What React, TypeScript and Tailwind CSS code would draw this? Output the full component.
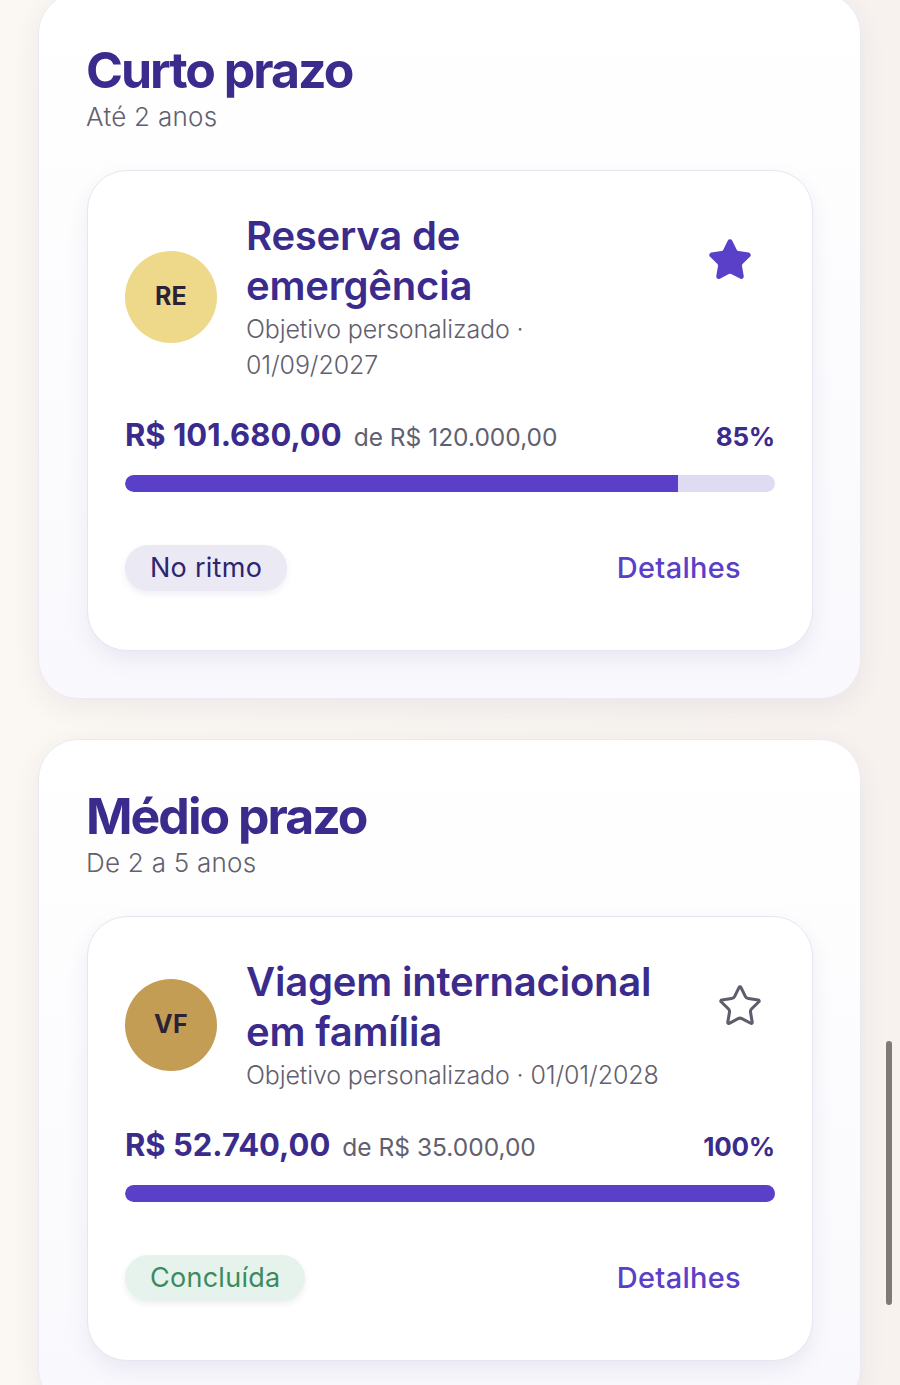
import React from "react";

const StarIcon = ({ filled, className }: { filled: boolean; className?: string }) => (
  <svg
    width="46"
    height="46"
    viewBox="0 0 24 24"
    fill={filled ? "currentColor" : "none"}
    stroke="currentColor"
    strokeWidth={1.6}
    strokeLinecap="round"
    strokeLinejoin="round"
    className={className}
  >
    <path d="M11.525 2.295a.53.53 0 0 1 .95 0l2.31 4.679a2.123 2.123 0 0 0 1.595 1.16l5.166.756a.53.53 0 0 1 .294.904l-3.736 3.638a2.123 2.123 0 0 0-.611 1.878l.882 5.14a.53.53 0 0 1-.771.56l-4.618-2.428a2.122 2.122 0 0 0-1.973 0L6.396 21.01a.53.53 0 0 1-.77-.56l.881-5.139a2.122 2.122 0 0 0-.611-1.879L2.16 9.795a.53.53 0 0 1 .294-.906l5.165-.755a2.122 2.122 0 0 0 1.597-1.16z" />
  </svg>
);

type Goal = {
  initials: string;
  avatarBg: string;
  titleLines: string[];
  subLines: string[];
  amount: string;
  target: string;
  pct: number;
  starred: boolean;
  starMr: string;
  status: "ritmo" | "concluida";
};

const GoalCard = ({ g }: { g: Goal }) => (
  <div className="rounded-[40px] border border-[#e7e5f0] bg-white px-[37px] pt-[40px] pb-[59px] shadow-[0_10px_22px_rgba(50,40,110,0.08)]">
    <div className="flex items-center">
      <div
        className={`flex h-[92px] w-[92px] shrink-0 items-center justify-center rounded-full ${g.avatarBg}`}
      >
        <span className="text-[25px] font-bold text-[#2b2238] tracking-[0.01em]">{g.initials}</span>
      </div>
      <div className="ml-[29px] flex-1">
        {g.titleLines.map((t) => (
          <div
            key={t}
            className="whitespace-nowrap text-[40px] leading-[50px] font-semibold tracking-[-0.005em] text-[#3a2b8c]"
          >
            {t}
          </div>
        ))}
        {g.subLines.map((t) => (
          <div key={t} className="whitespace-nowrap text-[25px] leading-[36px] font-light tracking-[-0.005em] text-[#62606e]">
            {t}
          </div>
        ))}
      </div>
      <div className={`self-start mt-[26px] ${g.starMr}`}>
        <StarIcon filled={g.starred} className={g.starred ? "text-[#5a40c8]" : "text-[#5f5d6b]"} />
      </div>
    </div>

    <div className="mt-[29px] flex h-[40px] items-baseline">
      <span className="text-[31px] font-bold tracking-[0em] text-[#3a2b8c]">{g.amount}</span>
      <span className="ml-[12px] text-[24.5px] font-normal tracking-[0em] text-[#62606e]">
        de {g.target}
      </span>
      <span className="ml-auto text-[26px] font-bold tracking-[-0.01em] text-[#3a2b8c]">{g.pct}%</span>
    </div>

    <div className="mt-[23px] h-[17px] w-full overflow-hidden rounded-full bg-[#dedbf2]">
      <div className="h-full rounded-l-full bg-[#5a40c8]" style={{ width: `${g.pct}%` }} />
    </div>

    <div className="mt-[53px] flex items-center justify-between">
      {g.status === "ritmo" ? (
        <span className="flex h-[46px] items-center rounded-full bg-[#ebe9f3] px-[25px] text-[27px] font-normal tracking-[0.01em] text-[#2e2470] shadow-[0_3px_6px_rgba(50,40,110,0.08)]">
          No ritmo
        </span>
      ) : (
        <span className="flex h-[46px] items-center rounded-full bg-[#e6f3ec] px-[25px] text-[27px] font-normal tracking-[0.01em] text-[#3d8a5e] shadow-[0_3px_6px_rgba(50,40,110,0.08)]">
          Concluída
        </span>
      )}
      <span className="mr-[34px] text-[29px] font-medium tracking-[0.01em] text-[#5a40c8]">Detalhes</span>
    </div>
  </div>
);

const Section = ({
  title,
  subtitle,
  goal,
  className,
}: {
  title: string;
  subtitle: string;
  goal: Goal;
  className?: string;
}) => (
  <section
    className={`ml-[38px] w-[823px] rounded-[40px] border border-[#ebe9f2] bg-gradient-to-b from-white to-[#f9f9fd] px-[47px] pt-[48px] pb-[47px] shadow-[0_8px_28px_rgba(60,50,120,0.07)] ${className ?? ""}`}
  >
    <h2 className="text-[50px] leading-[56px] font-bold tracking-[-0.04em] text-[#3a2b8c]">{title}</h2>
    <p className="text-[26px] leading-[38px] font-light tracking-[0.01em] text-[#62606e]">{subtitle}</p>
    <div className="mt-[34px] pl-[1px]">
      <GoalCard g={goal} />
    </div>
  </section>
);

export default function App() {
  const g1: Goal = {
    initials: "RE",
    avatarBg: "bg-[#eed88a]",
    titleLines: ["Reserva de", "emergência"],
    subLines: ["Objetivo personalizado ·", "01/09/2027"],
    amount: "R$ 101.680,00",
    target: "R$ 120.000,00",
    pct: 85,
    starred: true,
    starMr: "mr-[22px]",
    status: "ritmo",
  };
  const g2: Goal = {
    initials: "VF",
    avatarBg: "bg-[#c49d55]",
    titleLines: ["Viagem internacional", "em família"],
    subLines: ["Objetivo personalizado · 01/01/2028"],
    amount: "R$ 52.740,00",
    target: "R$ 35.000,00",
    pct: 100,
    starred: false,
    starMr: "mr-[12px]",
    status: "concluida",
  };

  return (
    <div className="relative h-[1385px] w-[900px] overflow-hidden bg-gradient-to-r from-[#fbf7f2] via-[#f8f4f0] to-[#f7f2ee] font-['Inter',sans-serif]">
      <div className="-mt-[7px]">
        <Section title="Curto prazo" subtitle="Até 2 anos" goal={g1} />
        <Section title="Médio prazo" subtitle="De 2 a 5 anos" goal={g2} className="mt-[40px]" />
      </div>
      <div className="absolute left-[886px] top-[1041px] h-[264px] w-[6px] rounded-full bg-[#7f7a76]" />
    </div>
  );
}
